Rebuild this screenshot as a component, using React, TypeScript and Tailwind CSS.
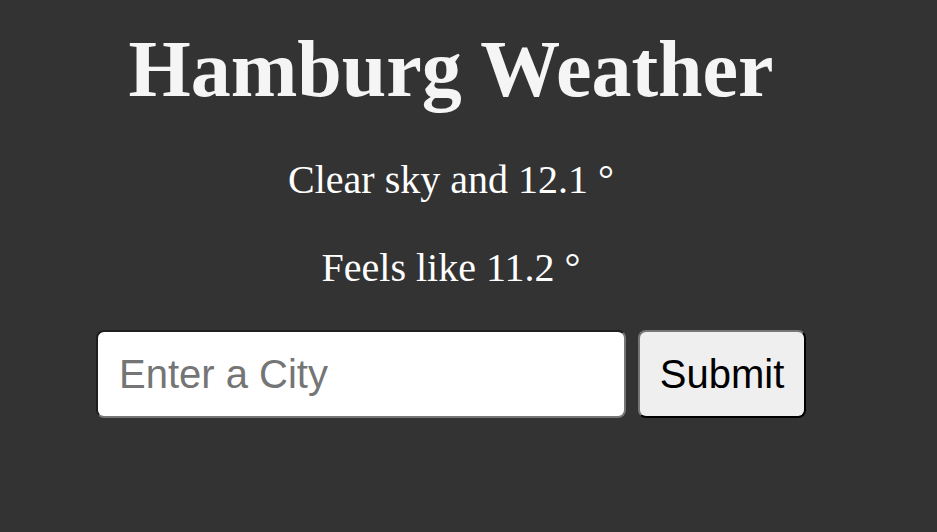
import { FC } from "react";

const App: FC = () => {
  return (
    <div className="min-h-[532px] w-full bg-[#333333]">
      {/* content column is off-centre in the screenshot, centred at x=451 */}
      <div className="flex w-[902px] flex-col items-center font-['Liberation_Serif',serif]">
        <h1 className="mt-[24px] text-[80px] font-bold leading-[normal] text-[#f5f5f5]">
          Hamburg Weather
        </h1>
        <p className="mt-[41px] text-[40px] leading-[normal] text-white">
          Clear sky and 12.1 °
        </p>
        <p className="mt-[41px] text-[40px] leading-[normal] text-white">
          Feels like 11.2 °
        </p>
        <form
          className="mt-[39px] flex gap-[12px]"
          onSubmit={(e) => e.preventDefault()}
        >
          <input
            type="text"
            placeholder="Enter a City"
            className="h-[88px] w-[530px] rounded-[8px] border-2 border-t-[#1e1e1e] border-l-[#1e1e1e] border-r-[#767676] border-b-[#767676] bg-white px-[21px] font-['Liberation_Sans',Arial,sans-serif] text-[40px] text-black outline-none placeholder:text-[#757575]"
          />
          <button
            type="submit"
            className="h-[88px] w-[168px] rounded-[8px] border-2 border-t-[#767676] border-l-[#767676] border-r-black border-b-black bg-[#efefef] font-['Liberation_Sans',Arial,sans-serif] text-[40px] text-black"
          >
            Submit
          </button>
        </form>
      </div>
    </div>
  );
};

export default App;
